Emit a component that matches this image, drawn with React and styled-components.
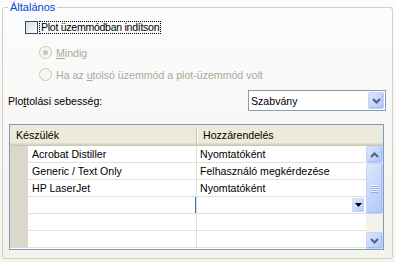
import styled, { createGlobalStyle } from 'styled-components';

const GlobalStyle = createGlobalStyle`
  html, body {
    margin: 0;
    padding: 0;
  }
  body {
    width: 395px;
    height: 262px;
    overflow: hidden;
    background: linear-gradient(#fcfcfe, #f3f2ec);
    font-family: "Liberation Sans", Arial, sans-serif;
    font-size: 10.6px;
    color: #000;
  }
  * {
    box-sizing: border-box;
  }
`;

const Group = styled.fieldset`
  margin: 1px 2px 0;
  padding: 0;
  height: 258px;
  border: 1px solid #d0d0bf;
  border-radius: 3px;
  min-inline-size: auto;
`;
const Legend = styled.legend`
  margin-left: 5px;
  padding: 0 2px;
  line-height: 13px;
  font-size: 11px;
  color: #0046d5;
`;
const Content = styled.div`
  display: flex;
  flex-direction: column;
`;
const CheckRow = styled.div`
  display: flex;
  align-items: center;
  height: 13px;
  margin: 7px 0 0 22px;
`;
const CheckBox = styled.span`
  width: 13px;
  height: 13px;
  border: 1px solid #1c5180;
  background: linear-gradient(135deg, #dcdcd4, #f4f4f0 70%, #fff);
`;
const FocusLabel = styled.span`
  margin-left: 1px;
  height: 13px;
  padding: 0 1px;
  line-height: 11px;
  letter-spacing: -0.3px;
  border: 1px dotted #000;
`;
const RadioRow = styled.div`
  display: flex;
  align-items: center;
  height: 13px;
  margin: ${(p) => p.$top}px 0 0 36px;
  color: #aca899;
`;
const Radio = styled.span`
  position: relative;
  width: 13px;
  height: 13px;
  margin-right: 4px;
  border: 1px solid #cac8bb;
  border-radius: 50%;
  background: #f7f6f1;
  &::after {
    content: '';
    display: ${(p) => (p.$checked ? 'block' : 'none')};
    position: absolute;
    left: 3px;
    top: 3px;
    width: 5px;
    height: 5px;
    border-radius: 50%;
    background: #cac8bb;
  }
`;
const SpeedRow = styled.div`
  display: flex;
  align-items: center;
  justify-content: space-between;
  height: 21px;
  margin: 9px 6px 0 5px;
`;
const Combo = styled.div`
  display: flex;
  align-items: center;
  width: 138px;
  height: 21px;
  padding: 0 1px 0 2px;
  border: 1px solid #7f9db9;
  background: #fff;
`;
const ComboText = styled.span`
  flex: 1;
`;
const XpButton = styled.span`
  display: flex;
  align-items: center;
  justify-content: center;
  width: ${(p) => p.$w || 17}px;
  height: ${(p) => p.$h || 17}px;
  border: 1px solid #c3d3fd;
  border-radius: 2px;
  background: linear-gradient(135deg, #dde7fe, #c4d5fc 55%, #b3c8f7);
  box-shadow: inset -1px -1px 0 #a6bdf2;
`;
const Table = styled.div`
  display: flex;
  flex-direction: column;
  height: 126px;
  margin: 13px 8px 0 6px;
  border: 1px solid #7f9db9;
  background: #fff;
`;
const Header = styled.div`
  display: flex;
  height: 21px;
  background: #ebeadb;
  box-shadow: inset 0 -1px 0 #cbc7b8, inset 0 -2px 0 #d6d2c2, inset 0 -3px 0 #e2decd;
`;
const HeaderCell = styled.div`
  display: flex;
  align-items: center;
  width: ${(p) => p.$w}px;
  height: 21px;
  padding: 0 0 2px ${(p) => p.$pad}px;
`;
const Sep = styled.span`
  width: 2px;
  height: 15px;
  margin: 3px 0 0;
  border-left: 1px solid #c7c5b2;
  border-right: 1px solid #fff;
`;
const Body = styled.div`
  display: flex;
  flex: 1;
`;
const Rows = styled.div`
  flex: 1;
  display: flex;
  flex-direction: column;
`;
const Row = styled.div`
  display: grid;
  grid-template-columns: 18px 169px 1fr;
  height: 17px;
`;
const RowHead = styled.div`
  background: #dad8c8;
`;
const Cell = styled.div`
  display: flex;
  align-items: center;
  padding-left: ${(p) => p.$pad}px;
  border-bottom: 1px solid #e2e1d5;
  border-right: ${(p) => (p.$divider ? '1px solid #e2e1d5' : 'none')};
  box-shadow: ${(p) => (p.$editing ? 'inset -1px 0 0 #316ac5' : 'none')};
  white-space: nowrap;
`;
const CellButton = styled.span`
  display: flex;
  align-items: center;
  justify-content: center;
  width: 12px;
  height: 14px;
  margin: 0 2px 0 auto;
  background: linear-gradient(135deg, #dce6fd, #b7cbf8);
  border-radius: 1px;
`;
const ScrollBar = styled.div`
  display: flex;
  flex-direction: column;
  width: 17px;
  background: #f4f3ea;
`;
const Thumb = styled(XpButton)`
  height: 51px;
  flex-direction: column;
  gap: 1px;
`;
const Grip = styled.span`
  width: 7px;
  height: 1px;
  background: #eef3fe;
  box-shadow: 0 1px 0 #8cb0f8;
`;
const Track = styled.div`
  flex: 1;
`;

const Chevron = ({ up }) => (
  <svg width="9" height="6" viewBox="0 0 9 6">
    <polyline
      points={up ? '1,5 4.5,1.5 8,5' : '1,1 4.5,4.5 8,1'}
      fill="none"
      stroke="#4d6185"
      strokeWidth="2"
    />
  </svg>
);

const rows = [
  ['Acrobat Distiller', 'Nyomtatóként'],
  ['Generic / Text Only', 'Felhasználó megkérdezése'],
  ['HP LaserJet', 'Nyomtatóként'],
  ['', '', true],
  ['', ''],
  ['', ''],
];

const App = () => {
  return (
    <>
      <GlobalStyle />
      <Group>
        <Legend>Általános</Legend>
        <Content>
          <CheckRow>
            <CheckBox />
            <FocusLabel>Plot üzemmódban indítson</FocusLabel>
          </CheckRow>
          <RadioRow $top={12}>
            <Radio $checked />
            <span>
              <u>M</u>indig
            </span>
          </RadioRow>
          <RadioRow $top={9}>
            <Radio />
            <span>
              Ha az <u>u</u>tolsó üzemmód a plot-üzemmód volt
            </span>
          </RadioRow>
          <SpeedRow>
            <span>
              Plo<u>t</u>tolási sebesség:
            </span>
            <Combo>
              <ComboText>Szabvány</ComboText>
              <XpButton $w={16} $h={17}>
                <Chevron />
              </XpButton>
            </Combo>
          </SpeedRow>
          <Table>
            <Header>
              <HeaderCell $w={186} $pad={6}>Készülék</HeaderCell>
              <Sep />
              <HeaderCell $w={170} $pad={5}>Hozzárendelés</HeaderCell>
            </Header>
            <Body>
              <Rows>
                {rows.map(([device, mode, editing], i) => (
                  <Row key={`row_${i}`}>
                    <RowHead />
                    <Cell $pad={4} $divider $editing={editing}>
                      {device}
                    </Cell>
                    <Cell $pad={3}>
                      {mode}
                      {editing && (
                        <CellButton>
                          <svg width="7" height="4" viewBox="0 0 7 4">
                            <polygon points="0,0 7,0 3.5,4" fill="#000" />
                          </svg>
                        </CellButton>
                      )}
                    </Cell>
                  </Row>
                ))}
              </Rows>
              <ScrollBar>
                <XpButton>
                  <Chevron up />
                </XpButton>
                <Thumb>
                  <Grip />
                  <Grip />
                  <Grip />
                  <Grip />
                </Thumb>
                <Track />
                <XpButton>
                  <Chevron />
                </XpButton>
              </ScrollBar>
            </Body>
          </Table>
        </Content>
      </Group>
    </>
  );
};

export default App;
